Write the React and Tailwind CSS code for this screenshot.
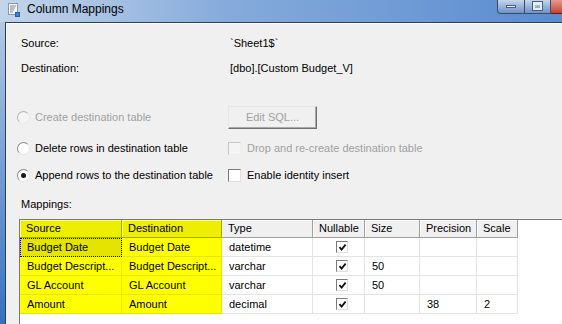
const cols = [
  { name: "Source", w: "w-[102px]", hl: true },
  { name: "Destination", w: "w-[100px]", hl: true },
  { name: "Type", w: "w-[91px]" },
  { name: "Nullable", w: "w-[52px]", box: true },
  { name: "Size", w: "w-[55px]" },
  { name: "Precision", w: "w-[57px]" },
  { name: "Scale", w: "w-[41px]" },
];

const rows = [
  ["Budget Date", "Budget Date", "datetime", true, "", "", ""],
  ["Budget Descript...", "Budget Descript...", "varchar", true, "50", "", ""],
  ["GL Account", "GL Account", "varchar", true, "50", "", ""],
  ["Amount", "Amount", "decimal", true, "", "38", "2"],
];

const Radio = ({ checked, disabled }) => (
  <div
    className={`w-[13px] h-[13px] rounded-full border flex items-center justify-center shrink-0 ${
      disabled
        ? "bg-[#f4f4f4] border-t-[#b4b4b4] border-l-[#b4b4b4] border-b-[#e8e8e8] border-r-[#e8e8e8]"
        : "bg-white border-t-[#8a8a8a] border-l-[#8a8a8a] border-b-[#e6e6e6] border-r-[#e6e6e6]"
    }`}
  >
    {checked && <div className="w-[5px] h-[5px] rounded-full bg-[#1a1a1a]" />}
  </div>
);

const Check = ({ checked, disabled, small }) => (
  <div
    className={`${small ? "w-[12px] h-[12px]" : "w-[13px] h-[13px]"} border shrink-0 flex items-center justify-center ${
      disabled
        ? "bg-[#f4f4f4] border-t-[#c4c4c4] border-l-[#c4c4c4] border-b-[#ededed] border-r-[#ededed]"
        : "bg-white border-t-[#7a7a7a] border-l-[#7a7a7a] border-b-[#dedede] border-r-[#dedede]"
    }`}
  >
    {checked && (
      <svg width="9" height="9" viewBox="0 0 9 9">
        <path d="M1.5 4.2 L3.6 6.6 L7.6 1.6" fill="none" stroke="#111" strokeWidth="1.8" />
      </svg>
    )}
  </div>
);

const TitleIcon = () => (
  <svg width="14" height="14" viewBox="0 0 14 14" className="shrink-0">
    <rect x="1.5" y="0.5" width="9" height="11" fill="#f6f6f6" stroke="#8a97a8" />
    <path d="M3 3h6M3 5h5M3 7h4M3 9h3" stroke="#7d8a9a" strokeWidth="1" />
    <rect x="8.5" y="9.5" width="4" height="4" fill="#3d7fd6" stroke="#2a5ea8" />
  </svg>
);

export default function App() {
  return (
    <div className="w-[562px] h-[324px] overflow-hidden flex flex-col font-['Liberation_Sans',Arial,sans-serif] text-[11px] text-black bg-[#f0f0f0]">
      {/* title bar */}
      <div className="h-[22px] shrink-0 flex items-start bg-gradient-to-r from-[#c3d5ea] via-[#86abdb] via-40% to-[#5a8cd0]">
        <div className="ml-[7px] mt-[3px]">
          <TitleIcon />
        </div>
        <div className="ml-[6px] mt-[1px] text-[12px] leading-[16px] text-black">Column Mappings</div>
        <div className="ml-auto mr-[-32px] flex h-[14px]">
          <div className="w-[28px] h-full rounded-bl-[4px] border border-t-0 border-[#3a4c68] bg-gradient-to-b from-[#c4d6ec] to-[#6d93c6] flex items-center justify-center">
            <div className="w-[10px] h-[3px] bg-white/80 border border-[#4a5f80]" />
          </div>
          <div className="w-[26px] h-full border-b border-r border-[#3a4c68] bg-gradient-to-b from-[#c4d6ec] to-[#6d93c6] flex items-start justify-center pt-[2px]">
            <div className="w-[9px] h-[8px] border-2 border-t-[3px] border-[#e8eef6] outline outline-1 outline-[#4a5f80]" />
          </div>
          <div className="w-[43px] h-full border-b border-[#5a2020] bg-gradient-to-b from-[#e59a8c] to-[#c5402f]" />
        </div>
      </div>

      <div className="flex-1 flex min-h-0">
        {/* left frame */}
        <div className="w-[5px] shrink-0 bg-gradient-to-b from-[#b3c8e2] to-[#3570c2]" />
        <div className="w-px shrink-0 bg-[#2e3f5a]" />

        <div className="flex-1 flex flex-col min-w-0 border-t border-[#2e3f5a] bg-[#f0f0f0] shadow-[inset_0_1px_0_#ffffff]">
          <div className="mt-[8px] h-[25px] flex items-center ml-[15px]">
            <div className="w-[209px]">Source:</div>
            <div>`Sheet1$`</div>
          </div>
          <div className="h-[25px] flex items-center ml-[15px]">
            <div className="w-[209px]">Destination:</div>
            <div>[dbo].[Custom Budget_V]</div>
          </div>

          <div className="mt-[23px] h-[27px] flex items-center ml-[11px]">
            <div className="w-[211px] flex items-center gap-[5px] text-[#a0a0a0]">
              <Radio disabled />
              <span>Create destination table</span>
            </div>
            <div className="w-[89px] h-[23px] bg-[#f0f0f0] border border-t-[#e6e6e6] border-l-[#e6e6e6] border-b-[#707070] border-r-[#707070] shadow-[inset_-1px_-1px_0_#a8a8a8] flex items-center justify-center text-[#a0a0a0]">
              Edit SQL...
            </div>
          </div>
          <div className="mt-[4px] h-[27px] flex items-center ml-[11px]">
            <div className="w-[211px] flex items-center gap-[5px]">
              <Radio />
              <span>Delete rows in destination table</span>
            </div>
            <div className="flex items-center gap-[6px] text-[#a0a0a0]">
              <Check disabled />
              <span>Drop and re-create destination table</span>
            </div>
          </div>
          <div className="h-[27px] flex items-center ml-[11px]">
            <div className="w-[211px] flex items-center gap-[5px]">
              <Radio checked />
              <span>Append rows to the destination table</span>
            </div>
            <div className="flex items-center gap-[6px]">
              <Check />
              <span>Enable identity insert</span>
            </div>
          </div>

          <div className="mt-[7px] h-[16px] flex items-center ml-[15px]">Mappings:</div>

          {/* grid */}
          <div className="mt-[7px] ml-[13px] flex-1 bg-white border-l border-t border-[#7a7a7a] overflow-hidden">
            <div className="flex h-[18px]">
              {cols.map((c) => (
                <div
                  key={c.name}
                  className={`${c.w} shrink-0 h-full flex items-center pl-[6px] border-r border-b ${
                    c.hl
                      ? "bg-[#eeee00] border-[#a6a600] shadow-[inset_1px_1px_0_#ffff80]"
                      : "bg-[#f0f0f0] border-[#a0a0a0] shadow-[inset_1px_1px_0_#ffffff]"
                  }`}
                >
                  {c.name}
                </div>
              ))}
            </div>
            {rows.map((r, i) => (
              <div key={i} className="flex h-[19px]">
                {cols.map((c, j) => {
                  const selected = i === 0 && j === 0;
                  return (
                    <div
                      key={c.name}
                      className={`${c.w} shrink-0 h-full flex items-center border-r border-b ${
                        c.box ? "pl-[23px]" : "pl-[7px]"
                      } ${
                        c.hl
                          ? selected
                            ? "bg-[#e4e400] border-[#e4e400] outline outline-1 outline-dotted outline-black -outline-offset-1"
                            : "bg-[#ffff00] border-[#e6e600]"
                          : "bg-white border-[#e4e4e4]"
                      }`}
                    >
                      {c.box ? <Check checked={r[j]} small /> : r[j]}
                    </div>
                  );
                })}
              </div>
            ))}
          </div>
        </div>
      </div>
    </div>
  );
}
